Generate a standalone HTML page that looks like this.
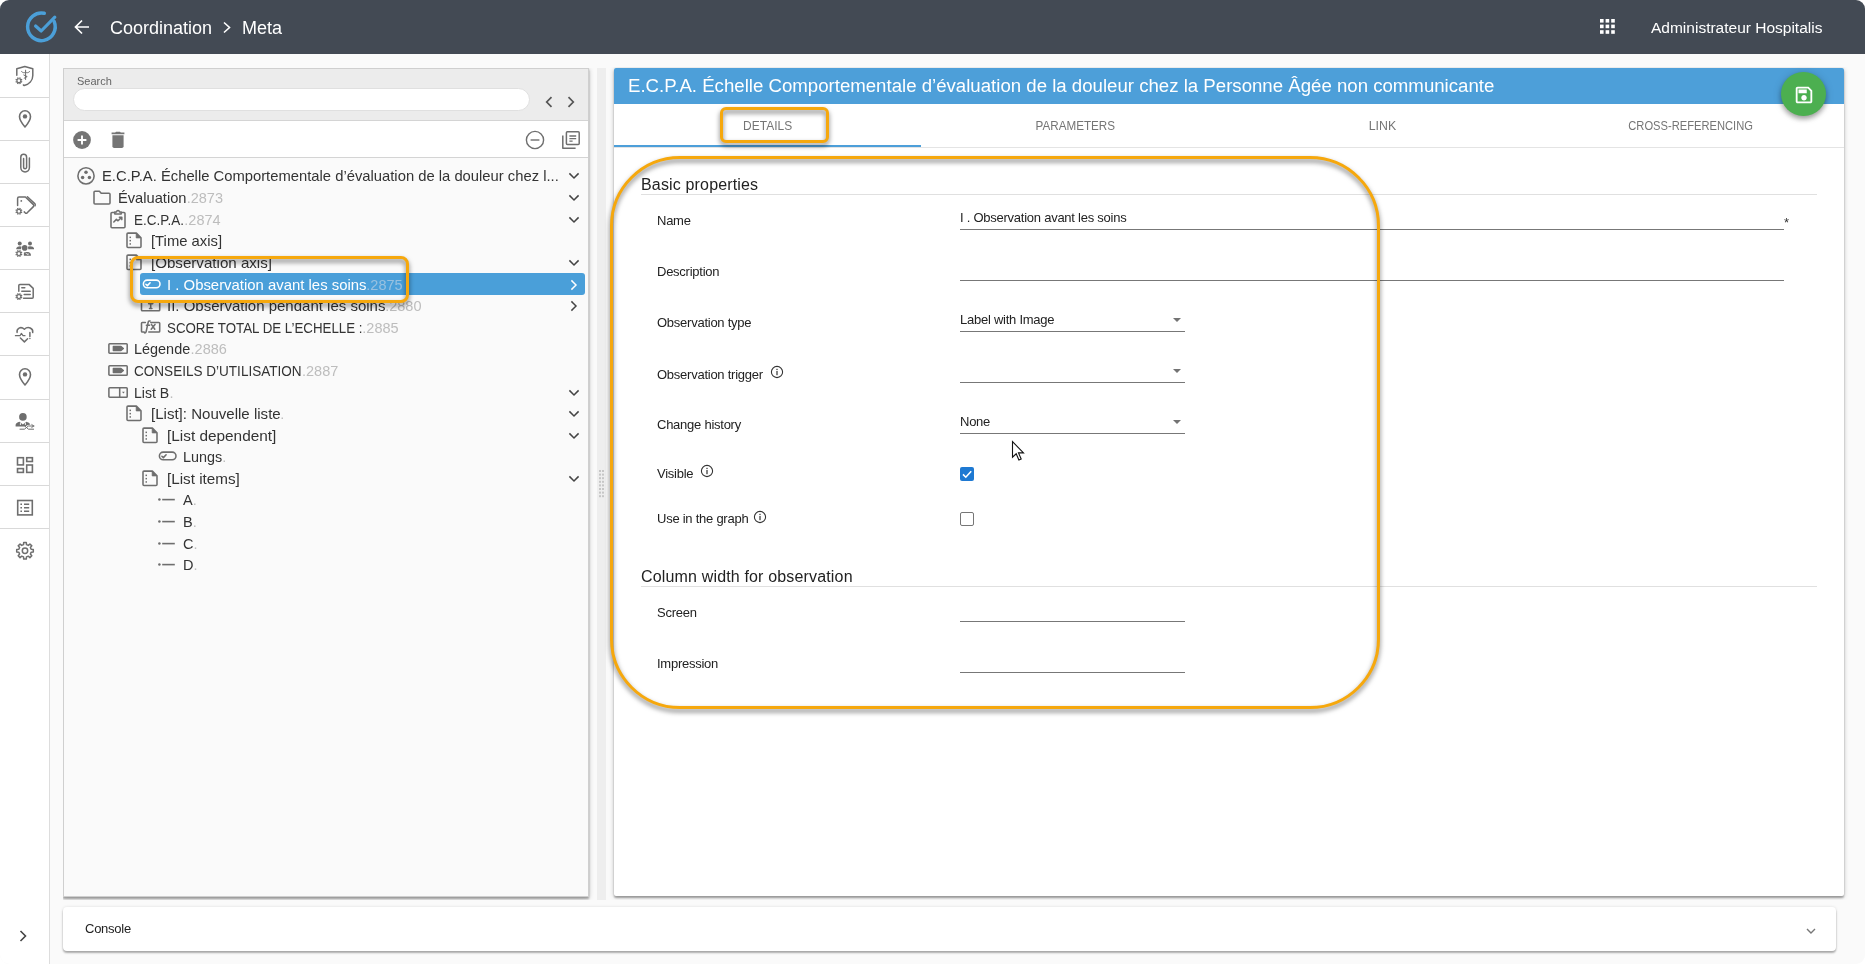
<!DOCTYPE html>
<html lang="en">
<head>
<meta charset="utf-8">
<title>Coordination - Meta</title>
<style>
*{box-sizing:border-box;margin:0;padding:0}
html{width:1865px;height:964px;overflow:hidden;background:#fff}
body{width:1865px;height:964px;overflow:hidden;background:#fafafa;border-radius:9px;position:relative;font-family:"Liberation Sans",sans-serif;color:#212121}
.abs{position:absolute}
svg{display:block}
/* header */
#hdr,#lp,#rp,#cons{will-change:transform}
#hdr{left:0;top:0;width:1865px;height:54px;background:#434a54}
#hdr .t{color:#fff;font-size:18px;line-height:54px;top:1px;white-space:nowrap}
/* sidebar */
#side{left:0;top:54px;width:50px;height:910px;background:#fff;border-right:1px solid #ddd}
#side .it{position:absolute;left:0;width:49px;height:43px;border-bottom:1px solid #dcdcdc}
#side .it svg{position:absolute;left:13px;top:10px}
/* left panel */
#lp{left:63px;top:68px;width:526px;height:829px;background:#fafafa;border:1px solid #cfcfcf;box-shadow:0 2px 2px rgba(0,0,0,.3),0 1px 5px rgba(0,0,0,.22);clip-path:inset(0 -10px -3px 0)}
#srch{left:0;top:0;width:524px;height:52px;background:#ececec;border-bottom:1px solid #d4d4d4}
#tb{left:0;top:52px;width:524px;height:37px;background:#fff;border-bottom:1px solid #d4d4d4}
.tr{position:absolute;left:0;width:524px;height:22px;font-size:14.5px;line-height:22px;color:#333;white-space:nowrap}
.tr .ic{position:absolute;top:0}
.tr .lb{position:absolute;top:1px}
.tr .id{color:#bdbdbd}
.tr .tx{display:inline-block;transform-origin:0 50%}
.tr .ch{position:absolute;left:503px;top:5px}
/* right panel */
#rp{left:614px;top:68px;width:1230px;height:828px;background:#fff;border-radius:2px;box-shadow:0 2px 2px rgba(0,0,0,.3),0 1px 5px rgba(0,0,0,.22);clip-path:inset(-1px -10px -4px -10px)}
#ttl{left:0;top:0;width:1230px;height:36px;background:#4d9fd9;border-radius:2px 2px 0 0;color:#fff;font-size:18px;line-height:37px;padding-left:14px;white-space:nowrap}
#ttl span{display:inline-block;transform-origin:0 50%;transform:scaleX(1.0348)}
.tab{position:absolute;top:36px;height:43px;line-height:43px;font-size:13px;color:#757575;text-align:center;width:307.5px;white-space:nowrap}
.tab span{display:inline-block}
.h{position:absolute;left:27px;font-size:16px;color:#222;white-space:nowrap;line-height:20px;letter-spacing:.16px;margin-top:1px}
.hl{position:absolute;left:27px;width:1176px;height:1px;background:#e0e0e0}
.l{position:absolute;left:43px;font-size:13px;color:#222;line-height:16px;white-space:nowrap;letter-spacing:-.25px;margin-top:1px}
.f{position:absolute;left:346px;border-bottom:1px solid #777;font-size:13px;color:#222;line-height:16px;height:25px;padding-top:4.5px;white-space:nowrap;letter-spacing:-.25px}
.hi{position:absolute;border:3px solid #f6a80d;filter:drop-shadow(0 3px 2.5px rgba(0,0,0,.55))}
.sel .lb{color:#fff}
.sel .id{color:#98c1e0}
</style>
</head>
<body>
<div id="hdr" class="abs">
  <svg class="abs" style="left:24px;top:9px" width="36" height="36" viewBox="0 0 36 36"><path d="M30.2 12.63A13.8 13.8 0 1 1 20.27 4.3" fill="none" stroke="#4b9fd8" stroke-width="3.5" stroke-linecap="round"/><path d="M11.6 17L17.2 22L30.8 8.2" fill="none" stroke="#4b9fd8" stroke-width="3.2" stroke-linecap="round" stroke-linejoin="round"/></svg>
  <svg class="abs" style="left:74px;top:19px" width="16" height="16" viewBox="0 0 16 16"><path d="M15 8H2M8 1.5L1.5 8L8 14.5" fill="none" stroke="#fff" stroke-width="1.7"/></svg>
  <div class="abs t" style="left:110px">Coordination</div>
  <svg class="abs" style="left:222px;top:21px" width="10" height="13" viewBox="0 0 10 13"><path d="M2 1.5L7.5 6.5L2 11.5" fill="none" stroke="#fff" stroke-width="1.6"/></svg>
  <div class="abs t" style="left:242px">Meta</div>
  <svg class="abs" style="left:1600px;top:19.3px" width="15" height="15" viewBox="0 0 15 15" fill="#fff"><rect x="0" y="0" width="3.6" height="3.6"/><rect x="5.6" y="0" width="3.6" height="3.6"/><rect x="11.2" y="0" width="3.6" height="3.6"/><rect x="0" y="5.6" width="3.6" height="3.6"/><rect x="5.6" y="5.6" width="3.6" height="3.6"/><rect x="11.2" y="5.6" width="3.6" height="3.6"/><rect x="0" y="11.2" width="3.6" height="3.6"/><rect x="5.6" y="11.2" width="3.6" height="3.6"/><rect x="11.2" y="11.2" width="3.6" height="3.6"/></svg>
  <div class="abs t" style="left:1651px;font-size:15.5px">Administrateur Hospitalis</div>
</div>

<div id="side" class="abs">
<div class="abs" style="left:0;top:43px;width:49px;height:1px;background:#d9d9d9"></div>
<div class="abs" style="left:0;top:86px;width:49px;height:1px;background:#d9d9d9"></div>
<div class="abs" style="left:0;top:129px;width:49px;height:1px;background:#d9d9d9"></div>
<div class="abs" style="left:0;top:172px;width:49px;height:1px;background:#d9d9d9"></div>
<div class="abs" style="left:0;top:215px;width:49px;height:1px;background:#d9d9d9"></div>
<div class="abs" style="left:0;top:258px;width:49px;height:1px;background:#d9d9d9"></div>
<div class="abs" style="left:0;top:301px;width:49px;height:1px;background:#d9d9d9"></div>
<div class="abs" style="left:0;top:345px;width:49px;height:1px;background:#d9d9d9"></div>
<div class="abs" style="left:0;top:388px;width:49px;height:1px;background:#d9d9d9"></div>
<div class="abs" style="left:0;top:431px;width:49px;height:1px;background:#d9d9d9"></div>
<div class="abs" style="left:0;top:474px;width:49px;height:1px;background:#d9d9d9"></div>
<svg class="abs" style="left:13px;top:10px" width="24" height="24" viewBox="0 0 24 24" fill="none" stroke="#6e6e6e" stroke-width="1.5" stroke-linecap="round" stroke-linejoin="round" ><path d="M3.8 11.2V4.8L11.8 2.5L19.8 4.8V11.5C19.8 16.6 16 20.3 11.2 21.5L10.4 21"/><path d="M12.6 6.2V15.5M8.6 7.6C10 9 11.4 9 12.6 8.2C13.8 9 15.2 9 16.6 7.6M10.8 11L14.2 12.6L11.2 14.2" stroke-width="1"/><circle cx="5.9" cy="16.7" r="1.95" fill="none" stroke="#6e6e6e" stroke-width="1.15"/><path d="M7.98 17.56L9.13 18.04M6.76 18.78L7.24 19.93M5.04 18.78L4.56 19.93M3.82 17.56L2.67 18.04M3.82 15.84L2.67 15.36M5.04 14.62L4.56 13.47M6.76 14.62L7.24 13.47M7.98 15.84L9.13 15.36" stroke="#6e6e6e" stroke-width="1.4" stroke-linecap="butt"/></svg>
<svg class="abs" style="left:12.7px;top:52.5px" width="24" height="24" viewBox="0 0 24 24" fill="none" stroke="#6e6e6e" stroke-width="1.5" stroke-linecap="round" stroke-linejoin="round" ><path d="M12 3.8C8.9 3.8 6.5 6.3 6.5 9.5C6.5 13.6 12 20 12 20C12 20 17.5 13.6 17.5 9.5C17.5 6.3 15.1 3.8 12 3.8Z" stroke-width="1.6"/><circle cx="12" cy="9.4" r="2.2" fill="#6e6e6e" stroke="none"/></svg>
<svg class="abs" style="left:13px;top:96px" width="24" height="24" viewBox="0 0 24 24" fill="none" stroke="#6e6e6e" stroke-width="1.5" stroke-linecap="round" stroke-linejoin="round" ><path d="M16.4 8V17.6A4.3 4.3 0 0 1 7.8 17.6V7.2A2.9 2.9 0 0 1 13.6 7.2V17.2A1.5 1.5 0 0 1 10.6 17.2V8.4"/></svg>
<svg class="abs" style="left:13px;top:138.5px" width="24" height="24" viewBox="0 0 24 24" fill="none" stroke="#6e6e6e" stroke-width="1.5" stroke-linecap="round" stroke-linejoin="round" ><path d="M4.6 12.6V5.4Q4.6 4 6 4H12.4L20.4 11.6Q21.2 12.6 20.4 13.6L14.2 19.8Q13.2 20.6 12.2 19.8L11.2 18.9"/><path d="M14.4 3.7L22 10.9Q22.6 11.8 22 12.8"/><circle cx="8.3" cy="7.9" r="0.9" fill="#6e6e6e" stroke="none"/><circle cx="5.9" cy="18.3" r="1.95" fill="none" stroke="#6e6e6e" stroke-width="1.15"/><path d="M7.98 19.16L9.13 19.64M6.76 20.38L7.24 21.53M5.04 20.38L4.56 21.53M3.82 19.16L2.67 19.64M3.82 17.44L2.67 16.96M5.04 16.22L4.56 15.07M6.76 16.22L7.24 15.07M7.98 17.44L9.13 16.96" stroke="#6e6e6e" stroke-width="1.4" stroke-linecap="butt"/></svg>
<svg class="abs" style="left:13px;top:181.5px" width="24" height="24" viewBox="0 0 24 24" fill="none" stroke="#6e6e6e" stroke-width="1.5" stroke-linecap="round" stroke-linejoin="round" ><g fill="#6e6e6e" stroke="none"><circle cx="6.7" cy="7.6" r="2"/><circle cx="17" cy="7.6" r="2"/><circle cx="11.7" cy="11.9" r="2.8"/><path d="M3.3 13.3V12Q4.2 10.3 6.9 10.3Q8.1 10.3 8.7 10.8Q7.9 12 8.1 13.3Z"/><path d="M15.2 13.3Q15.4 12 14.8 10.8Q15.6 10.3 17 10.3Q20.4 10.3 21 12.3V13.3Z"/><path d="M10.9 19.7V16.5Q13 15.5 15.4 16.1Q17.7 16.8 17.9 18.6V19.7Z"/></g><path d="M13 17.2L14.2 18.4M15 17.6V18.6" stroke="#fff" stroke-width="0.8"/><circle cx="5.9" cy="17.5" r="1.95" fill="none" stroke="#6e6e6e" stroke-width="1.15"/><path d="M7.98 18.36L9.13 18.84M6.76 19.58L7.24 20.73M5.04 19.58L4.56 20.73M3.82 18.36L2.67 18.84M3.82 16.64L2.67 16.16M5.04 15.42L4.56 14.27M6.76 15.42L7.24 14.27M7.98 16.64L9.13 16.16" stroke="#6e6e6e" stroke-width="1.4" stroke-linecap="butt"/></svg>
<svg class="abs" style="left:13px;top:224.5px" width="24" height="24" viewBox="0 0 24 24" fill="none" stroke="#6e6e6e" stroke-width="1.5" stroke-linecap="round" stroke-linejoin="round" ><path d="M5.8 12.2V6.4Q5.8 5.4 6.8 5.4H16L20.2 9.4V18.2Q20.2 19.2 19.2 19.2H10.6"/><path d="M8.8 8.8H11.8M8.8 12.2H17.2M11.2 15.6H17.2" /><circle cx="5.9" cy="17.6" r="1.95" fill="none" stroke="#6e6e6e" stroke-width="1.15"/><path d="M7.98 18.46L9.13 18.94M6.76 19.68L7.24 20.83M5.04 19.68L4.56 20.83M3.82 18.46L2.67 18.94M3.82 16.74L2.67 16.26M5.04 15.52L4.56 14.37M6.76 15.52L7.24 14.37M7.98 16.74L9.13 16.26" stroke="#6e6e6e" stroke-width="1.4" stroke-linecap="butt"/></svg>
<svg class="abs" style="left:13px;top:267.5px" width="24" height="24" viewBox="0 0 24 24" fill="none" stroke="#6e6e6e" stroke-width="1.5" stroke-linecap="round" stroke-linejoin="round" ><path d="M4.1 10.4C3.4 6.6 7.6 3.8 11.4 7.2C15.2 3.8 20.4 6.4 19.7 10.6"/><path d="M7.4 16L11.4 19.9L14.6 16.8"/><path d="M2.4 13.7H7L8.4 11.4L10 13.7H12" stroke-width="1.2"/><path d="M16.9 10.4V14.4M16.9 16.4V16.6" stroke-width="1.5"/></svg>
<svg class="abs" style="left:12.7px;top:311px" width="24" height="24" viewBox="0 0 24 24" fill="none" stroke="#6e6e6e" stroke-width="1.5" stroke-linecap="round" stroke-linejoin="round" ><path d="M12 3.8C8.9 3.8 6.5 6.3 6.5 9.5C6.5 13.6 12 20 12 20C12 20 17.5 13.6 17.5 9.5C17.5 6.3 15.1 3.8 12 3.8Z" stroke-width="1.6"/><circle cx="12" cy="9.4" r="2.2" fill="#6e6e6e" stroke="none"/></svg>
<svg class="abs" style="left:13px;top:353.5px" width="24" height="24" viewBox="0 0 24 24" fill="none" stroke="#6e6e6e" stroke-width="1.5" stroke-linecap="round" stroke-linejoin="round" ><g fill="#6e6e6e" stroke="none"><circle cx="9.9" cy="8.9" r="3.8"/><path d="M2.6 18.6V16.8Q3 14.6 6.6 13.8L9.9 16.6L13.2 13.8Q16.6 14.6 17.4 16.6L15 17L12 18.6Z"/></g><path d="M7 21.2H11.4L15.4 18H21M18.8 16.6L20.8 18L18.8 19.4M11.8 18L15.4 21.2H20.6" stroke-width="1"/><path d="M7.4 15V16.6M12.4 15V16.6" stroke="#fff" stroke-width="0.9"/></svg>
<svg class="abs" style="left:13px;top:398px" width="24" height="24" viewBox="0 0 24 24" fill="none" stroke="#6e6e6e" stroke-width="1.5" stroke-linecap="round" stroke-linejoin="round" ><rect x="4.5" y="5.7" width="5.9" height="7.2" stroke-width="1.6" stroke-linejoin="miter"/><rect x="13.7" y="5.7" width="5.7" height="3.8" stroke-width="1.6" stroke-linejoin="miter"/><rect x="4.5" y="16.6" width="5.9" height="3.8" stroke-width="1.6" stroke-linejoin="miter"/><rect x="13.7" y="13" width="5.7" height="7.4" stroke-width="1.6" stroke-linejoin="miter"/></svg>
<svg class="abs" style="left:13px;top:441px" width="24" height="24" viewBox="0 0 24 24" fill="none" stroke="#6e6e6e" stroke-width="1.5" stroke-linecap="round" stroke-linejoin="round" ><rect x="4.7" y="5.5" width="14.6" height="14.4" stroke-width="1.6" stroke-linejoin="miter"/><path d="M7.4 9.2H9M7.4 12.7H9M7.4 16.2H9M11 9.2H16.2M11 12.7H16.2M11 16.2H16.2" stroke-width="1.6" stroke-linecap="butt"/></svg>
<svg class="abs" style="left:12.7px;top:485px" width="24" height="24" viewBox="0 0 24 24" fill="none" stroke="#6e6e6e" stroke-width="1.5" stroke-linecap="round" stroke-linejoin="round" ><path d="M10.69 3.50 L13.31 3.50 L13.47 5.67 L15.29 6.43 L16.94 5.00 L18.80 6.86 L17.37 8.51 L18.13 10.33 L20.30 10.49 L20.30 13.11 L18.13 13.27 L17.37 15.09 L18.80 16.74 L16.94 18.60 L15.29 17.17 L13.47 17.93 L13.31 20.10 L10.69 20.10 L10.53 17.93 L8.71 17.17 L7.06 18.60 L5.20 16.74 L6.63 15.09 L5.87 13.27 L3.70 13.11 L3.70 10.49 L5.87 10.33 L6.63 8.51 L5.20 6.86 L7.06 5.00 L8.71 6.43 L10.53 5.67Z" stroke-width="1.5"/><circle cx="12" cy="11.8" r="2.7" stroke-width="1.5"/></svg>
</div>

<div id="lp" class="abs">
  <div id="srch" class="abs">
    <div class="abs" style="left:13px;top:5px;font-size:11px;color:#666;line-height:14px">Search</div>
    <div class="abs" style="left:9px;top:19px;width:456.5px;height:23px;background:#fff;border-radius:11.5px;border:1px solid #e0e0e0"></div>
    <svg class="abs" style="left:481px;top:26.5px" width="8" height="12" viewBox="0 0 8 12"><path d="M6.5 1.2L1.7 6L6.5 10.8" fill="none" stroke="#555" stroke-width="1.7"/></svg>
    <svg class="abs" style="left:503px;top:26.5px" width="8" height="12" viewBox="0 0 8 12"><path d="M1.5 1.2L6.3 6L1.5 10.8" fill="none" stroke="#555" stroke-width="1.7"/></svg>
  </div>
  <div id="tb" class="abs">
<svg class="abs" style="left:8.8px;top:9.8px" width="18" height="18" viewBox="0 0 18 18" fill="none" stroke="#6e6e6e" stroke-width="1.5" stroke-linecap="round" stroke-linejoin="round" ><circle cx="9" cy="9" r="8.9" fill="#757575" stroke="none"/><path d="M4.6 9H13.4M9 4.6V13.4" stroke="#fff" stroke-width="1.9" stroke-linecap="butt"/></svg>
<svg class="abs" style="left:46px;top:9px" width="16" height="20" viewBox="0 0 16 20" fill="none" stroke="#6e6e6e" stroke-width="1.5" stroke-linecap="round" stroke-linejoin="round" ><g fill="#757575" stroke="none"><path d="M1.6 2.6H5.2L6 1.7H10L10.8 2.6H14.4V4.2H1.6Z"/><path d="M2.4 5.2H13.6V16.2Q13.6 18 11.8 18H4.2Q2.4 18 2.4 16.2Z"/></g></svg>
<svg class="abs" style="left:460.8px;top:8.8px" width="20" height="20" viewBox="0 0 20 20" fill="none" stroke="#6e6e6e" stroke-width="1.5" stroke-linecap="round" stroke-linejoin="round" ><circle cx="10" cy="10" r="8.6" stroke-width="1.4"/><path d="M5.6 10H14.4" stroke-width="1.4" stroke-linecap="butt"/></svg>
<svg class="abs" style="left:496px;top:8px" width="22" height="22" viewBox="0 0 22 22" fill="none" stroke="#6e6e6e" stroke-width="1.5" stroke-linecap="round" stroke-linejoin="round" ><rect x="6.4" y="2.8" width="12.8" height="12.8" rx="1" stroke-width="1.5"/><path d="M2.8 6.4V19.2H15.6" stroke-width="1.5" stroke-linecap="butt"/><path d="M9.4 7H16.2M9.4 9.6H16.2M9.4 12.2H12.6" stroke-width="1.3" stroke-linecap="butt"/></svg>
  </div>
<div class="tr" style="top:95.30px"><svg class="abs" style="left:11.80px;top:1.0px" width="20" height="20" viewBox="0 0 20 20"><circle cx="10" cy="10.9" r="8.1" fill="none" stroke="#6e6e6e" stroke-width="1.55" stroke-linejoin="round" stroke-linecap="round"/><circle cx="10" cy="7.2" r="1.75" fill="#6e6e6e"/><circle cx="6.6" cy="12.6" r="1.75" fill="#6e6e6e"/><circle cx="13.4" cy="12.6" r="1.75" fill="#6e6e6e"/></svg><div class="lb" style="left:38.00px"><span class="tx" style="transform:scaleX(1.0199);margin-right:8.91px">E.C.P.A. Échelle Comportementale d’évaluation de la douleur chez l...</span></div><svg class="abs" style="left:504px;top:8px" width="12" height="8" viewBox="0 0 12 8"><path d="M1.4 1.4L6 6L10.6 1.4" fill="none" stroke="#444" stroke-width="1.5"/></svg></div>
<div class="tr" style="top:117.30px"><svg class="abs" style="left:27.90px;top:1.0px" width="20" height="20" viewBox="0 0 20 20"><path d="M2 5.3Q2 4.3 3 4.3H7.4L9.2 6.3H17Q18 6.3 18 7.3V15.9Q18 16.9 17 16.9H3Q2 16.9 2 15.9Z" fill="none" stroke="#6e6e6e" stroke-width="1.55" stroke-linejoin="round" stroke-linecap="round"/></svg><div class="lb" style="left:54.20px"><span class="tx" style="transform:scaleX(1.0115);margin-right:0.78px">Évaluation</span><span class="id">.2873</span></div><svg class="abs" style="left:504px;top:8px" width="12" height="8" viewBox="0 0 12 8"><path d="M1.4 1.4L6 6L10.6 1.4" fill="none" stroke="#444" stroke-width="1.5"/></svg></div>
<div class="tr" style="top:139.30px"><svg class="abs" style="left:43.60px;top:-1.0px" width="20" height="24" viewBox="0 0 20 24"><path d="M6.6 5.4H4Q3 5.4 3 6.4V19.8Q3 20.8 4 20.8H16Q17 20.8 17 19.8V6.4Q17 5.4 16 5.4H13.4" fill="none" stroke="#6e6e6e" stroke-width="1.55" stroke-linejoin="round" stroke-linecap="round"/><path d="M6.8 7V5H8.5Q8.7 3.4 10 3.4Q11.3 3.4 11.5 5H13.2V7Z" fill="none" stroke="#6e6e6e" stroke-width="1.55" stroke-linejoin="round" stroke-linecap="round" stroke-width="1.15"/><path d="M5.8 15L8.4 12.4L10 13.8L13.6 10.4M11.4 10.2H13.8V12.6" fill="none" stroke="#6e6e6e" stroke-width="1.55" stroke-linejoin="round" stroke-linecap="round" stroke-width="1.25"/></svg><div class="lb" style="left:70.40px"><span class="tx" style="transform:scaleX(0.9286);margin-right:-3.83px">E.C.P.A.</span><span class="id">.2874</span></div><svg class="abs" style="left:504px;top:8px" width="12" height="8" viewBox="0 0 12 8"><path d="M1.4 1.4L6 6L10.6 1.4" fill="none" stroke="#444" stroke-width="1.5"/></svg></div>
<div class="tr" style="top:160.30px"><svg class="abs" style="left:60.90px;top:1.0px" width="20" height="20" viewBox="0 0 20 20"><path d="M2 4.1Q2 3.1 3 3.1H11.4L16 7.7V16.4Q16 17.4 15 17.4H3Q2 17.4 2 16.4Z" fill="none" stroke="#6e6e6e" stroke-width="1.55" stroke-linejoin="round" stroke-linecap="round" stroke-width="1.6"/><path d="M11.2 3.3L15.8 7.9H11.2Z" fill="#6e6e6e" stroke="#6e6e6e" stroke-width="0.8"/><rect x="4.5" y="6.6" width="1.5" height="1.5" fill="#6e6e6e"/><rect x="4.5" y="9.9" width="1.5" height="1.5" fill="#6e6e6e"/><rect x="4.5" y="13.2" width="1.5" height="1.5" fill="#6e6e6e"/></svg><div class="lb" style="left:86.60px"><span class="tx" style="transform:scaleX(1.0221);margin-right:1.54px">[Time axis]</span></div></div>
<div class="tr" style="top:182.30px"><svg class="abs" style="left:60.90px;top:1.0px" width="20" height="20" viewBox="0 0 20 20"><path d="M2 4.1Q2 3.1 3 3.1H11.4L16 7.7V16.4Q16 17.4 15 17.4H3Q2 17.4 2 16.4Z" fill="none" stroke="#6e6e6e" stroke-width="1.55" stroke-linejoin="round" stroke-linecap="round" stroke-width="1.6"/><path d="M11.2 3.3L15.8 7.9H11.2Z" fill="#6e6e6e" stroke="#6e6e6e" stroke-width="0.8"/><rect x="4.5" y="6.6" width="1.5" height="1.5" fill="#6e6e6e"/><rect x="4.5" y="9.9" width="1.5" height="1.5" fill="#6e6e6e"/><rect x="4.5" y="13.2" width="1.5" height="1.5" fill="#6e6e6e"/></svg><div class="lb" style="left:86.60px"><span class="tx" style="transform:scaleX(1.0425);margin-right:4.94px">[Observation axis]</span></div><svg class="abs" style="left:504px;top:8px" width="12" height="8" viewBox="0 0 12 8"><path d="M1.4 1.4L6 6L10.6 1.4" fill="none" stroke="#444" stroke-width="1.5"/></svg></div>
<div class="tr sel" style="top:203.70px"><div class="abs" style="left:76px;top:0.3px;width:445px;height:22px;background:#4a9fd9;border-radius:3px"></div><svg class="abs" style="left:75.60px;top:1.0px" width="22" height="20" viewBox="0 0 22 20"><rect x="3.4" y="6.1" width="16.6" height="7.6" rx="3.8" fill="none" stroke="#fff" stroke-width="1.55" stroke-linejoin="round" stroke-linecap="round" stroke-width="1.5"/><path d="M5.9 10.2L7.4 11.6L10.1 8.7" fill="none" stroke="#fff" stroke-width="1.55" stroke-linejoin="round" stroke-linecap="round" stroke-width="1"/></svg><div class="lb" style="left:102.80px"><span class="tx" style="transform:scaleX(1.027);margin-right:5.25px">I . Observation avant les soins</span><span class="id">.2875</span></div><svg class="abs" style="left:506px;top:6px" width="8" height="12" viewBox="0 0 8 12"><path d="M1.4 1.4L6 6L1.4 10.6" fill="none" stroke="#fff" stroke-width="1.5"/></svg></div>
<div class="tr" style="top:225.30px"><svg class="abs" style="left:75.90px;top:1.0px" width="22" height="20" viewBox="0 0 22 20"><rect x="1.5" y="5.9" width="18.2" height="9.9" rx="0.8" fill="none" stroke="#6e6e6e" stroke-width="1.55" stroke-linejoin="round" stroke-linecap="round" stroke-width="1.4"/><path d="M8.6 8.6H12.8M10.7 8.6V13.4M9.5 13.4H11.9" fill="none" stroke="#6e6e6e" stroke-width="1.55" stroke-linejoin="round" stroke-linecap="round" stroke-width="1.1"/></svg><div class="lb" style="left:102.80px"><span class="tx" style="transform:scaleX(1.0342);margin-right:7.21px">II. Observation pendant les soins</span><span class="id">.2880</span></div><svg class="abs" style="left:506px;top:6px" width="8" height="12" viewBox="0 0 8 12"><path d="M1.4 1.4L6 6L1.4 10.6" fill="none" stroke="#444" stroke-width="1.5"/></svg></div>
<div class="tr" style="top:247.30px"><svg class="abs" style="left:75.90px;top:1.0px" width="22" height="20" viewBox="0 0 22 20"><path d="M5.4 5.4H2.3Q1.5 5.4 1.5 6.2V14.2Q1.5 15 2.3 15H4.2M10.8 5.4H18.9Q19.7 5.4 19.7 6.2V14.2Q19.7 15 18.9 15H8.8" fill="none" stroke="#6e6e6e" stroke-width="1.55" stroke-linejoin="round" stroke-linecap="round" stroke-width="1.3"/><path d="M10 4.1Q8.5 3.6 8.1 5.6L6.2 14.4Q5.8 16.2 4.4 15.8M6.4 8.2H9.6" fill="none" stroke="#6e6e6e" stroke-width="1.55" stroke-linejoin="round" stroke-linecap="round" stroke-width="1.1"/><path d="M11.4 7.4L14.8 12.2M15 7.4L11.2 12.2" fill="none" stroke="#6e6e6e" stroke-width="1.55" stroke-linejoin="round" stroke-linecap="round" stroke-width="1.05"/></svg><div class="lb" style="left:102.80px"><span class="tx" style="transform:scaleX(0.9178);margin-right:-17.52px">SCORE TOTAL DE L’ECHELLE :</span><span class="id">.2885</span></div></div>
<div class="tr" style="top:268.30px"><svg class="abs" style="left:42.60px;top:1.0px" width="22" height="20" viewBox="0 0 22 20"><rect x="1.9" y="5.7" width="18.3" height="9.6" rx="0.8" fill="none" stroke="#6e6e6e" stroke-width="1.55" stroke-linejoin="round" stroke-linecap="round" stroke-width="1.45"/><path d="M6.3 8.5H14L16.4 10.5L14 12.5H6.3Z" fill="#6e6e6e" stroke="#6e6e6e" stroke-width="1.3" stroke-linejoin="round"/></svg><div class="lb" style="left:70.40px"><span class="tx" style="transform:scaleX(0.9955);margin-right:-0.25px">Légende</span><span class="id">.2886</span></div></div>
<div class="tr" style="top:290.30px"><svg class="abs" style="left:42.60px;top:1.0px" width="22" height="20" viewBox="0 0 22 20"><rect x="1.9" y="5.7" width="18.3" height="9.6" rx="0.8" fill="none" stroke="#6e6e6e" stroke-width="1.55" stroke-linejoin="round" stroke-linecap="round" stroke-width="1.45"/><path d="M6.3 8.5H14L16.4 10.5L14 12.5H6.3Z" fill="#6e6e6e" stroke="#6e6e6e" stroke-width="1.3" stroke-linejoin="round"/></svg><div class="lb" style="left:70.40px"><span class="tx" style="transform:scaleX(0.9342);margin-right:-11.81px">CONSEILS D’UTILISATION</span><span class="id">.2887</span></div></div>
<div class="tr" style="top:311.70px"><svg class="abs" style="left:42.60px;top:1.0px" width="22" height="20" viewBox="0 0 22 20"><rect x="1.9" y="5.7" width="18.3" height="9.6" rx="0.8" fill="none" stroke="#6e6e6e" stroke-width="1.55" stroke-linejoin="round" stroke-linecap="round" stroke-width="1.35"/><path d="M12.7 5.7V15.3" fill="none" stroke="#6e6e6e" stroke-width="1.55" stroke-linejoin="round" stroke-linecap="round" stroke-width="1.3"/><path d="M15 9.8H17.8L16.4 11.5Z" fill="#6e6e6e"/></svg><div class="lb" style="left:70.40px"><span class="tx" style="transform:scaleX(0.9706);margin-right:-1.07px">List B</span><span class="id">.</span></div><svg class="abs" style="left:504px;top:8px" width="12" height="8" viewBox="0 0 12 8"><path d="M1.4 1.4L6 6L10.6 1.4" fill="none" stroke="#444" stroke-width="1.5"/></svg></div>
<div class="tr" style="top:333.30px"><svg class="abs" style="left:60.90px;top:1.0px" width="20" height="20" viewBox="0 0 20 20"><path d="M2 4.1Q2 3.1 3 3.1H11.4L16 7.7V16.4Q16 17.4 15 17.4H3Q2 17.4 2 16.4Z" fill="none" stroke="#6e6e6e" stroke-width="1.55" stroke-linejoin="round" stroke-linecap="round" stroke-width="1.6"/><path d="M11.2 3.3L15.8 7.9H11.2Z" fill="#6e6e6e" stroke="#6e6e6e" stroke-width="0.8"/><rect x="4.5" y="6.6" width="1.5" height="1.5" fill="#6e6e6e"/><rect x="4.5" y="9.9" width="1.5" height="1.5" fill="#6e6e6e"/><rect x="4.5" y="13.2" width="1.5" height="1.5" fill="#6e6e6e"/></svg><div class="lb" style="left:86.60px"><span class="tx" style="transform:scaleX(1.0382);margin-right:4.78px">[List]: Nouvelle liste</span><span class="id">.</span></div><svg class="abs" style="left:504px;top:8px" width="12" height="8" viewBox="0 0 12 8"><path d="M1.4 1.4L6 6L10.6 1.4" fill="none" stroke="#444" stroke-width="1.5"/></svg></div>
<div class="tr" style="top:355.30px"><svg class="abs" style="left:77.10px;top:1.0px" width="20" height="20" viewBox="0 0 20 20"><path d="M2 4.1Q2 3.1 3 3.1H11.4L16 7.7V16.4Q16 17.4 15 17.4H3Q2 17.4 2 16.4Z" fill="none" stroke="#6e6e6e" stroke-width="1.55" stroke-linejoin="round" stroke-linecap="round" stroke-width="1.6"/><path d="M11.2 3.3L15.8 7.9H11.2Z" fill="#6e6e6e" stroke="#6e6e6e" stroke-width="0.8"/><rect x="4.5" y="6.6" width="1.5" height="1.5" fill="#6e6e6e"/><rect x="4.5" y="9.9" width="1.5" height="1.5" fill="#6e6e6e"/><rect x="4.5" y="13.2" width="1.5" height="1.5" fill="#6e6e6e"/></svg><div class="lb" style="left:102.80px"><span class="tx" style="transform:scaleX(1.0591);margin-right:6.1px">[List dependent]</span></div><svg class="abs" style="left:504px;top:8px" width="12" height="8" viewBox="0 0 12 8"><path d="M1.4 1.4L6 6L10.6 1.4" fill="none" stroke="#444" stroke-width="1.5"/></svg></div>
<div class="tr" style="top:376.30px"><svg class="abs" style="left:91.80px;top:1.0px" width="22" height="20" viewBox="0 0 22 20"><rect x="3.4" y="6.1" width="16.6" height="7.6" rx="3.8" fill="none" stroke="#6e6e6e" stroke-width="1.55" stroke-linejoin="round" stroke-linecap="round" stroke-width="1.5"/><path d="M5.9 10.2L7.4 11.6L10.1 8.7" fill="none" stroke="#6e6e6e" stroke-width="1.55" stroke-linejoin="round" stroke-linecap="round" stroke-width="1"/></svg><div class="lb" style="left:119.00px"><span class="tx" style="transform:scaleX(0.992);margin-right:-0.32px">Lungs</span><span class="id">.</span></div></div>
<div class="tr" style="top:398.30px"><svg class="abs" style="left:77.10px;top:1.0px" width="20" height="20" viewBox="0 0 20 20"><path d="M2 4.1Q2 3.1 3 3.1H11.4L16 7.7V16.4Q16 17.4 15 17.4H3Q2 17.4 2 16.4Z" fill="none" stroke="#6e6e6e" stroke-width="1.55" stroke-linejoin="round" stroke-linecap="round" stroke-width="1.6"/><path d="M11.2 3.3L15.8 7.9H11.2Z" fill="#6e6e6e" stroke="#6e6e6e" stroke-width="0.8"/><rect x="4.5" y="6.6" width="1.5" height="1.5" fill="#6e6e6e"/><rect x="4.5" y="9.9" width="1.5" height="1.5" fill="#6e6e6e"/><rect x="4.5" y="13.2" width="1.5" height="1.5" fill="#6e6e6e"/></svg><div class="lb" style="left:102.80px"><span class="tx" style="transform:scaleX(1.0506);margin-right:3.5px">[List items]</span></div><svg class="abs" style="left:504px;top:8px" width="12" height="8" viewBox="0 0 12 8"><path d="M1.4 1.4L6 6L10.6 1.4" fill="none" stroke="#444" stroke-width="1.5"/></svg></div>
<div class="tr" style="top:419.30px"><svg class="abs" style="left:91.60px;top:1.0px" width="20" height="20" viewBox="0 0 20 20"><circle cx="3.4" cy="10.6" r="1.25" fill="#6e6e6e"/><path d="M6.2 10.6H18.8" stroke="#6e6e6e" stroke-width="1.6"/></svg><div class="lb" style="left:119.00px"><span class="tx" style="">A</span><span class="id">.</span></div></div>
<div class="tr" style="top:441.30px"><svg class="abs" style="left:91.60px;top:1.0px" width="20" height="20" viewBox="0 0 20 20"><circle cx="3.4" cy="10.6" r="1.25" fill="#6e6e6e"/><path d="M6.2 10.6H18.8" stroke="#6e6e6e" stroke-width="1.6"/></svg><div class="lb" style="left:119.00px"><span class="tx" style="">B</span><span class="id">.</span></div></div>
<div class="tr" style="top:463.30px"><svg class="abs" style="left:91.60px;top:1.0px" width="20" height="20" viewBox="0 0 20 20"><circle cx="3.4" cy="10.6" r="1.25" fill="#6e6e6e"/><path d="M6.2 10.6H18.8" stroke="#6e6e6e" stroke-width="1.6"/></svg><div class="lb" style="left:119.00px"><span class="tx" style="">C</span><span class="id">.</span></div></div>
<div class="tr" style="top:484.30px"><svg class="abs" style="left:91.60px;top:1.0px" width="20" height="20" viewBox="0 0 20 20"><circle cx="3.4" cy="10.6" r="1.25" fill="#6e6e6e"/><path d="M6.2 10.6H18.8" stroke="#6e6e6e" stroke-width="1.6"/></svg><div class="lb" style="left:119.00px"><span class="tx" style="">D</span><span class="id">.</span></div></div>
</div>

<div class="abs" style="left:597px;top:68px;width:9px;height:832px;background:#eeeeee"></div>

<div id="rp" class="abs">
  <div id="ttl" class="abs"><span>E.C.P.A. Échelle Comportementale d’évaluation de la douleur chez la Personne Âgée non communicante</span></div>
  <div class="tab" style="left:0"><span style="transform:scaleX(.921)">DETAILS</span></div>
  <div class="tab" style="left:307.5px"><span style="transform:scaleX(.897)">PARAMETERS</span></div>
  <div class="tab" style="left:615px"><span style="transform:scaleX(.948)">LINK</span></div>
  <div class="tab" style="left:922.5px"><span style="transform:scaleX(.858)">CROSS-REFERENCING</span></div>
  <div class="abs" style="left:0;top:79px;width:1230px;height:1px;background:#e4e4e4"></div>
  <div class="abs" style="left:0;top:77px;width:307px;height:2px;background:#4d9fd9"></div>

  <div class="h" style="top:106px">Basic properties</div>
  <div class="hl" style="top:126px"></div>
  <div class="l" style="top:144px">Name</div>
  <div class="f" style="top:137px;width:824px">I . Observation avant les soins</div>
  <div class="abs" style="left:1170px;top:147px;font-size:13px;color:#333;line-height:16px">*</div>
  <div class="l" style="top:195px">Description</div>
  <div class="f" style="top:188px;width:824px"></div>
  <div class="l" style="top:246px">Observation type</div>
  <div class="f" style="top:239px;width:225px">Label with Image<svg class="abs" style="right:4px;top:11px" width="8" height="4" viewBox="0 0 8 4"><path d="M0 0H8L4 4Z" fill="#737373"/></svg></div>
  <div class="l" style="top:298px">Observation trigger</div>
  <svg class="abs inf" style="left:156px;top:297px" width="14" height="14" viewBox="0 0 14 14"><circle cx="7" cy="7" r="5.6" fill="none" stroke="#333" stroke-width="1.1"/><rect x="6.4" y="6" width="1.2" height="4.2" fill="#333"/><rect x="6.4" y="3.8" width="1.2" height="1.3" fill="#333"/></svg>
  <div class="f" style="top:290px;width:225px"><svg class="abs" style="right:4px;top:11px" width="8" height="4" viewBox="0 0 8 4"><path d="M0 0H8L4 4Z" fill="#737373"/></svg></div>
  <div class="l" style="top:348px">Change history</div>
  <div class="f" style="top:341px;width:225px">None<svg class="abs" style="right:4px;top:11px" width="8" height="4" viewBox="0 0 8 4"><path d="M0 0H8L4 4Z" fill="#737373"/></svg></div>
  <div class="l" style="top:397px">Visible</div>
  <svg class="abs inf" style="left:86px;top:396px" width="14" height="14" viewBox="0 0 14 14"><circle cx="7" cy="7" r="5.6" fill="none" stroke="#333" stroke-width="1.1"/><rect x="6.4" y="6" width="1.2" height="4.2" fill="#333"/><rect x="6.4" y="3.8" width="1.2" height="1.3" fill="#333"/></svg>
  <div class="abs" style="left:346px;top:399px;width:14px;height:14px;background:#1e79d2;border-radius:2px"><svg width="14" height="14" viewBox="0 0 14 14"><path d="M3 7.4L5.8 10.2L11.2 4.2" fill="none" stroke="#fff" stroke-width="1.6"/></svg></div>
  <div class="l" style="top:442px">Use in the graph</div>
  <svg class="abs inf" style="left:139px;top:442px" width="14" height="14" viewBox="0 0 14 14"><circle cx="7" cy="7" r="5.6" fill="none" stroke="#333" stroke-width="1.1"/><rect x="6.4" y="6" width="1.2" height="4.2" fill="#333"/><rect x="6.4" y="3.8" width="1.2" height="1.3" fill="#333"/></svg>
  <div class="abs" style="left:346px;top:444px;width:14px;height:14px;background:#fff;border:1px solid #767676;border-radius:2px"></div>
  <div class="h" style="top:498px">Column width for observation</div>
  <div class="hl" style="top:518px"></div>
  <div class="l" style="top:536px">Screen</div>
  <div class="f" style="top:529px;width:225px"></div>
  <div class="l" style="top:587px">Impression</div>
  <div class="f" style="top:580px;width:225px"></div>

</div>

<div id="cons" class="abs" style="left:63px;top:907px;width:1773px;height:44px;background:#fff;border-radius:4px;box-shadow:0 2px 2px rgba(0,0,0,.3),0 0 3px rgba(0,0,0,.12)">
  <div class="abs" style="left:22px;top:14px;font-size:13px;line-height:16px;color:#222;letter-spacing:-.25px">Console</div>
  <svg class="abs" style="left:1743px;top:21px" width="10" height="7" viewBox="0 0 10 7"><path d="M1 1L5 5L9 1" fill="none" stroke="#777" stroke-width="1.4"/></svg>
</div>
<svg class="abs" style="left:19px;top:930px" width="8" height="12" viewBox="0 0 8 12"><path d="M1.5 1L6.5 6L1.5 11" fill="none" stroke="#444" stroke-width="1.6"/></svg>

<div class="abs hi" style="left:129.7px;top:256px;width:279.6px;height:46.5px;border-radius:8px"></div>
<div class="abs hi" style="left:719.6px;top:106.7px;width:109.5px;height:36px;border-radius:6px"></div>
<div class="abs hi" style="left:610.3px;top:156.2px;width:769.7px;height:552.7px;border-radius:70px"></div>
<div class="abs" style="left:1781.2px;top:72px;width:44.4px;height:44.4px;border-radius:50%;background:#4caf50;box-shadow:0 3px 5px rgba(0,0,0,.3),0 1px 8px rgba(0,0,0,.18)"><svg class="abs" style="left:12px;top:11.9px" width="22" height="22" viewBox="0 0 24 24"><path fill="#fff" d="M17 3H5c-1.11 0-2 .9-2 2v14c0 1.1.89 2 2 2h14c1.1 0 2-.9 2-2V7l-4-4zm2 16H5V5h11.17L19 7.83V19zm-7-7c-1.66 0-3 1.34-3 3s1.34 3 3 3 3-1.34 3-3-1.34-3-3-3zM6 6h9v4H6z"/></svg></div>
<svg class="abs" style="left:1011px;top:440px" width="14" height="22" viewBox="0 0 14 22"><path d="M1.5 1.5V17.2L5.2 13.8L7.9 20L10.2 19L7.5 12.9H12.5Z" fill="#fff" stroke="#111" stroke-width="1.1" stroke-linejoin="miter"/></svg>
<svg class="abs" style="left:599px;top:470px" width="6" height="28" viewBox="0 0 6 28"><rect x="0" y="0.0" width="2" height="2" fill="#c6c6c6"/><rect x="3" y="0.0" width="2" height="2" fill="#c6c6c6"/><rect x="0" y="3.6" width="2" height="2" fill="#c6c6c6"/><rect x="3" y="3.6" width="2" height="2" fill="#c6c6c6"/><rect x="0" y="7.2" width="2" height="2" fill="#c6c6c6"/><rect x="3" y="7.2" width="2" height="2" fill="#c6c6c6"/><rect x="0" y="10.8" width="2" height="2" fill="#c6c6c6"/><rect x="3" y="10.8" width="2" height="2" fill="#c6c6c6"/><rect x="0" y="14.4" width="2" height="2" fill="#c6c6c6"/><rect x="3" y="14.4" width="2" height="2" fill="#c6c6c6"/><rect x="0" y="18.0" width="2" height="2" fill="#c6c6c6"/><rect x="3" y="18.0" width="2" height="2" fill="#c6c6c6"/><rect x="0" y="21.6" width="2" height="2" fill="#c6c6c6"/><rect x="3" y="21.6" width="2" height="2" fill="#c6c6c6"/><rect x="0" y="25.2" width="2" height="2" fill="#c6c6c6"/><rect x="3" y="25.2" width="2" height="2" fill="#c6c6c6"/></svg>
</body>
</html>
